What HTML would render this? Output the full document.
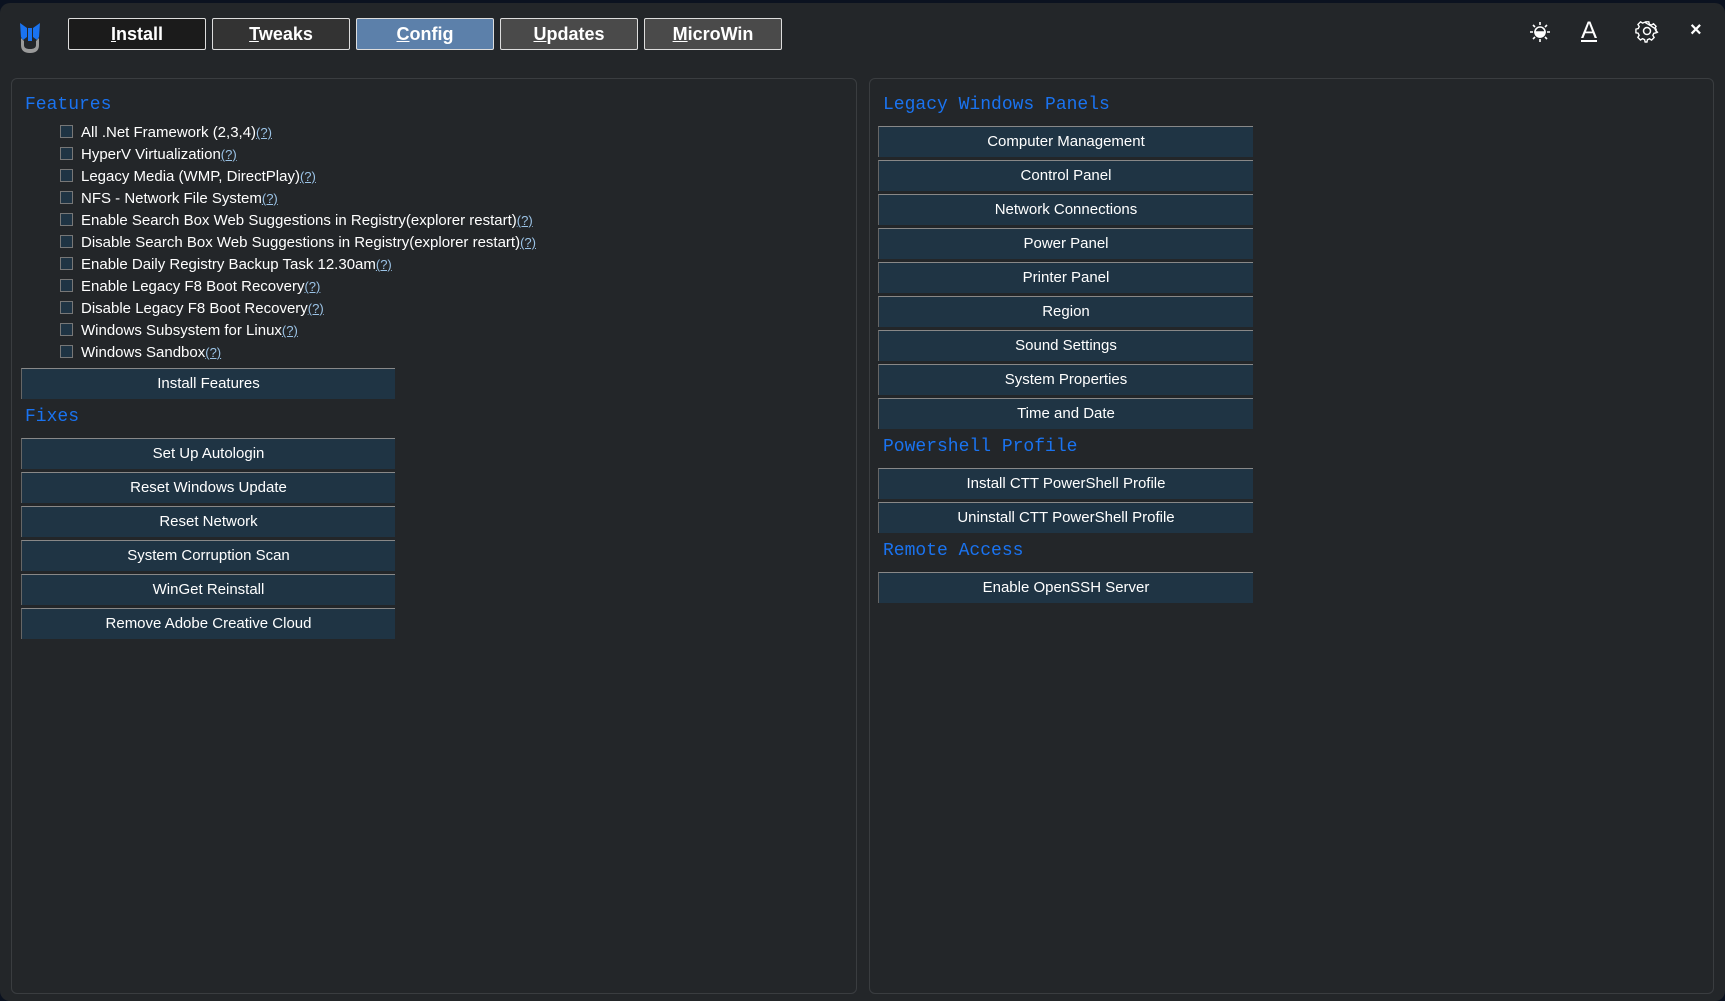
<!DOCTYPE html>
<html><head><meta charset="utf-8"><style>
*{margin:0;padding:0;box-sizing:border-box}
body{width:1725px;height:1001px;background:#0b1220;position:relative;overflow:hidden;font-family:"Liberation Sans",sans-serif}
.win{position:absolute;left:0;top:3px;width:1725px;height:998px;background:#232629;border-radius:10px}
.tab{position:absolute;top:15px;width:138px;height:32px;border:1px solid #ddd;border-radius:2px;color:#fff;font-weight:bold;font-size:18px;text-align:center;line-height:30px}
.panel{position:absolute;top:75px;height:916px;border:1px solid #3a3d40;border-radius:6px;background:#232629}
.in{position:absolute;left:0;top:3px;right:0}
.h{position:absolute;font-family:"Liberation Mono",monospace;font-size:18px;color:#1a73f0}
.cb{position:absolute;left:69px;font-size:15px;color:#fff;height:20px;line-height:20px}
.cb i{position:absolute;left:-21px;top:2px;width:13px;height:13px;border:1px solid #777;background:#1f3444}
.cb u{color:#9bc3e6;font-size:13px}
.btn{position:absolute;height:31px;background:#1f3444;border-top:1px solid #888;border-left:1px solid #666;color:#fff;font-size:15px;text-align:center;line-height:30px}
</style></head><body>
<div class="win">
<svg style="position:absolute;left:15px;top:18px" width="30" height="34" viewBox="0 0 22 34"><path d="M1 2 L8 7 L8 16 L4 19 L2 16 Z M21 2 L14 7 L14 16 L18 19 L20 16 Z M9 7 L13 7 L13 20 L9 20 Z" fill="#1a73f0"/><path d="M2 17 L2 24 Q2 32 11 32 Q20 32 20 24 L20 17 L17 20 L17 24 Q17 28 11 28 Q5 28 5 24 L5 20 Z" fill="#9a9a9a"/></svg>
<div class="tab" style="left:68px;background:#1b1b1b"><u>I</u>nstall</div>
<div class="tab" style="left:212px;background:#333"><u>T</u>weaks</div>
<div class="tab" style="left:356px;background:#5c80aa"><u>C</u>onfig</div>
<div class="tab" style="left:500px;background:#4a4a4a"><u>U</u>pdates</div>
<div class="tab" style="left:644px;background:#4a4a4a"><u>M</u>icroWin</div>
<svg style="position:absolute;left:1528px;top:17px" width="24" height="24" viewBox="0 0 24 24" stroke="#fff" stroke-width="1.6" fill="none"><circle cx="12" cy="12" r="5"/><path d="M12 12 m-5 0 a5 5 0 0 0 10 0z" fill="#fff"/><path d="M12 2v3M12 19v3M2 12h3M19 12h3M5 5l2 2M17 17l2 2M5 19l2-2M17 7l2-2"/></svg>
<div style="position:absolute;left:1581px;top:14px;color:#fff;font-size:24px;text-decoration:underline;font-family:'Liberation Sans',sans-serif">A</div>
<svg style="position:absolute;left:1635px;top:16px" width="24" height="24" viewBox="0 0 24 24" stroke="#fff" stroke-width="1.5" fill="none"><circle cx="12" cy="12" r="3.5"/><path d="M10 2h4l.6 2.6 2.2 1 2.3-1.4 2.8 2.8-1.4 2.3 1 2.2L24 14v0M22 10v4l-2.6.6-1 2.2 1.4 2.3-2.8 2.8-2.3-1.4-2.2 1L12 24h-2l-.6-2.6-2.2-1-2.3 1.4-2.8-2.8 1.4-2.3-1-2.2L0 14h0v-4l2.6-.6 1-2.2-1.4-2.3 2.8-2.8 2.3 1.4 2.2-1z" transform="scale(.92) translate(1 1)"/></svg>
<div style="position:absolute;left:1690px;top:16px;color:#fff;font-size:20px;font-weight:bold">×</div>

<div class="panel" style="left:11px;width:846px"><div class="in">
<div class="h" style="left:13px;top:13px">Features</div>
<div class="cb" style="top:41px"><i></i>All .Net Framework (2,3,4)<u>(?)</u></div>
<div class="cb" style="top:63px"><i></i>HyperV Virtualization<u>(?)</u></div>
<div class="cb" style="top:85px"><i></i>Legacy Media (WMP, DirectPlay)<u>(?)</u></div>
<div class="cb" style="top:107px"><i></i>NFS - Network File System<u>(?)</u></div>
<div class="cb" style="top:129px"><i></i>Enable Search Box Web Suggestions in Registry(explorer restart)<u>(?)</u></div>
<div class="cb" style="top:151px"><i></i>Disable Search Box Web Suggestions in Registry(explorer restart)<u>(?)</u></div>
<div class="cb" style="top:173px"><i></i>Enable Daily Registry Backup Task 12.30am<u>(?)</u></div>
<div class="cb" style="top:195px"><i></i>Enable Legacy F8 Boot Recovery<u>(?)</u></div>
<div class="cb" style="top:217px"><i></i>Disable Legacy F8 Boot Recovery<u>(?)</u></div>
<div class="cb" style="top:239px"><i></i>Windows Subsystem for Linux<u>(?)</u></div>
<div class="cb" style="top:261px"><i></i>Windows Sandbox<u>(?)</u></div>
<div class="btn" style="left:9px;width:374px;top:286px">Install Features</div>
<div class="h" style="left:13px;top:325px">Fixes</div>
<div class="btn" style="left:9px;width:374px;top:356px">Set Up Autologin</div>
<div class="btn" style="left:9px;width:374px;top:390px">Reset Windows Update</div>
<div class="btn" style="left:9px;width:374px;top:424px">Reset Network</div>
<div class="btn" style="left:9px;width:374px;top:458px">System Corruption Scan</div>
<div class="btn" style="left:9px;width:374px;top:492px">WinGet Reinstall</div>
<div class="btn" style="left:9px;width:374px;top:526px">Remove Adobe Creative Cloud</div>
</div></div>

<div class="panel" style="left:869px;width:845px"><div class="in">
<div class="h" style="left:13px;top:13px">Legacy Windows Panels</div>
<div class="btn" style="left:8px;width:375px;top:44px">Computer Management</div>
<div class="btn" style="left:8px;width:375px;top:78px">Control Panel</div>
<div class="btn" style="left:8px;width:375px;top:112px">Network Connections</div>
<div class="btn" style="left:8px;width:375px;top:146px">Power Panel</div>
<div class="btn" style="left:8px;width:375px;top:180px">Printer Panel</div>
<div class="btn" style="left:8px;width:375px;top:214px">Region</div>
<div class="btn" style="left:8px;width:375px;top:248px">Sound Settings</div>
<div class="btn" style="left:8px;width:375px;top:282px">System Properties</div>
<div class="btn" style="left:8px;width:375px;top:316px">Time and Date</div>
<div class="h" style="left:13px;top:355px">Powershell Profile</div>
<div class="btn" style="left:8px;width:375px;top:386px">Install CTT PowerShell Profile</div>
<div class="btn" style="left:8px;width:375px;top:420px">Uninstall CTT PowerShell Profile</div>
<div class="h" style="left:13px;top:459px">Remote Access</div>
<div class="btn" style="left:8px;width:375px;top:490px">Enable OpenSSH Server</div>
</div></div>
</div>
</body></html>
